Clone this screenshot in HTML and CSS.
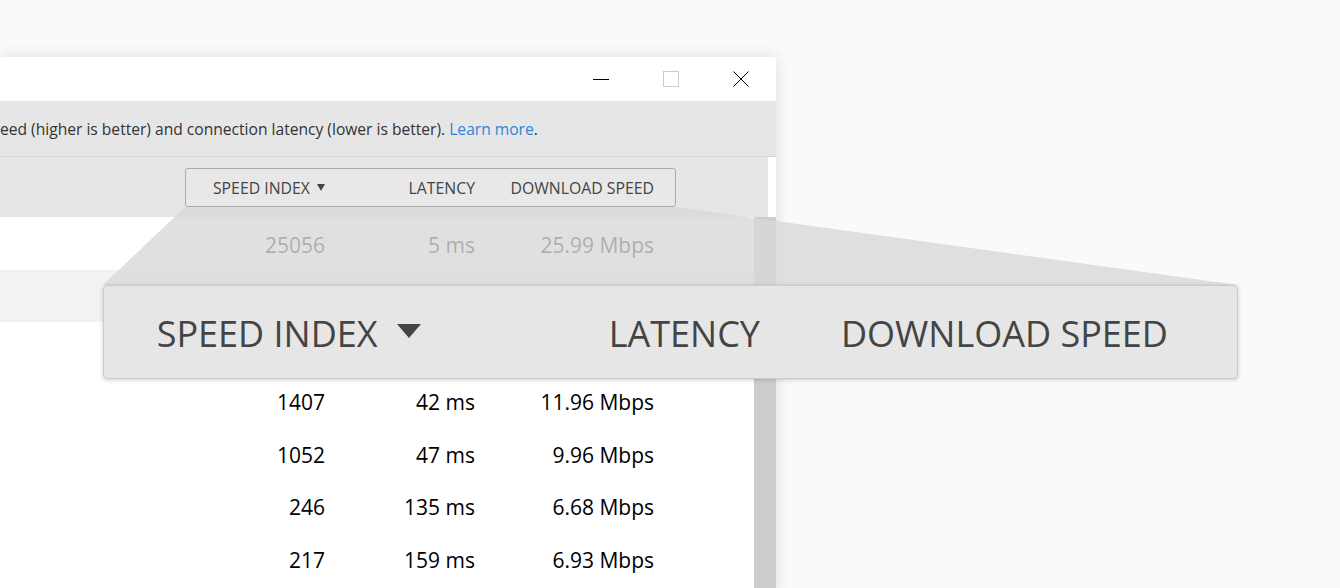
FILE: index.html
```html
<!DOCTYPE html>
<html lang="en">
<head>
    <meta charset="UTF-8">
    <meta name="viewport" content="width=device-width, initial-scale=1.0">
    <title>Speed index</title>
    <link rel="stylesheet" href="styles.css">
</head>
<body>
    <div class="window">
        <div class="titlebar">
            <div class="caption-btn">
                <svg width="16" height="16" viewBox="0 0 16 16"><path d="M0 8.5H16" stroke="#000" stroke-width="1"/></svg>
            </div>
            <div class="caption-btn">
                <svg width="16" height="16" viewBox="0 0 16 16"><rect x="0.5" y="0.5" width="15" height="15" fill="none" stroke="#ccc" stroke-width="1"/></svg>
            </div>
            <div class="caption-btn">
                <svg width="16" height="16" viewBox="0 0 16 16"><path d="M0.5 0.5L15.5 15.5M15.5 0.5L0.5 15.5" stroke="#000" stroke-width="1"/></svg>
            </div>
        </div>

        <div class="info">
            <p>eed (higher is better) and connection latency (lower is better). <a href="#">Learn more</a>.</p>
        </div>

        <div class="head-row">
            <div class="head-area">
                <div class="sort-box">
                    <span class="col">SPEED INDEX <i class="arrow"></i></span>
                    <span class="col">LATENCY</span>
                    <span class="col">DOWNLOAD SPEED</span>
                </div>
            </div>
            <div class="head-gap"></div>
        </div>

        <div class="list">
            <div class="rows">
                <div class="row"><span>25056</span><span>5 ms</span><span>25.99 Mbps</span></div>
                <div class="row alt"><span></span><span></span><span></span></div>
                <div class="row"><span></span><span></span><span></span></div>
                <div class="row"><span>1407</span><span>42 ms</span><span>11.96 Mbps</span></div>
                <div class="row"><span>1052</span><span>47 ms</span><span>9.96 Mbps</span></div>
                <div class="row"><span>246</span><span>135 ms</span><span>6.68 Mbps</span></div>
                <div class="row"><span>217</span><span>159 ms</span><span>6.93 Mbps</span></div>
            </div>
            <div class="scrollbar"></div>
        </div>
    </div>

    <!-- magnifier callout over the header -->
    <svg class="beam" width="1340" height="588" viewBox="0 0 1340 588">
        <polygon points="185,207 676,207 1238,285 103,285" fill="rgba(216,216,216,0.8)"/>
    </svg>
    <div class="zoom-box">
        <span class="col">SPEED INDEX <i class="arrow"></i></span>
        <span class="col">LATENCY</span>
        <span class="col">DOWNLOAD SPEED</span>
    </div>
</body>
</html>
```

FILE: styles.css
```css
*{
    box-sizing: border-box;
    margin: 0;
    padding: 0;
}
html, body{
    height: 100%;
}
body{
    background-color: #fafafa;
    font-family: "Open Sans", "Noto Sans", sans-serif;
    color: #000;
    overflow: hidden;
    position: relative;
}

.window{
    margin-top: 57px;
    width: 776px;
    background-color: #fff;
    box-shadow: 0 0 14px rgba(0, 0, 0, 0.12);
}
.titlebar{
    height: 44px;
    display: flex;
    justify-content: flex-end;
}
.caption-btn{
    width: 70px;
    display: flex;
    align-items: center;
    justify-content: center;
}
.caption-btn svg{
    display: block;
}

.info{
    height: 56px;
    background-color: #e6e6e6;
    border-bottom: 1px solid #d6d6d6;
    display: flex;
    align-items: center;
    overflow: hidden;
}
.info p{
    font-size: 15.6px;
    color: #333;
    white-space: nowrap;
}
.info a{
    color: #2b88d8;
    text-decoration: none;
}

.head-row{
    height: 60px;
    display: flex;
}
.head-area{
    flex: 1;
    background-color: #e6e6e6;
    padding: 11px 92px 0 0;
    display: flex;
    justify-content: flex-end;
    align-items: flex-start;
}
.head-gap{
    width: 8px;
    background-color: #fff;
}
.sort-box{
    width: 491px;
    height: 39px;
    border: 1px solid #ababab;
    border-radius: 3px;
    background-color: #e8e8e8;
    display: grid;
    grid-template-columns: 1fr 150px 179px;
    padding-right: 21px;
    align-items: center;
    font-size: 15.8px;
    color: #444;
}
.col{
    text-align: right;
    white-space: nowrap;
}
.arrow{
    display: inline-block;
    margin-left: 3px;
    border-left: 4.5px solid transparent;
    border-right: 4.5px solid transparent;
    border-top: 7px solid #444;
    vertical-align: 3px;
}

.list{
    height: 380px;
    display: flex;
    overflow: hidden;
}
.rows{
    flex: 1;
}
.row{
    height: 52.5px;
    padding-top: 3px;
    display: grid;
    grid-template-columns: 1fr 150px 179px;
    padding-right: 100px;
    align-items: center;
    font-size: 21px;
    text-align: right;
}
.row.alt{
    background-color: #f2f2f2;
}
.scrollbar{
    width: 22px;
    background-color: #cdcdcd;
}

.beam{
    position: absolute;
    top: 0;
    left: 0;
}
.zoom-box{
    position: absolute;
    top: 285px;
    left: 103px;
    width: 1135px;
    height: 94px;
    background-color: #e6e6e6;
    border: 1px solid #cbcbcb;
    border-radius: 4px;
    box-shadow: 0 1px 4px rgba(0, 0, 0, 0.18);
    display: grid;
    grid-template-columns: 1fr 339px 408px;
    padding-right: 69px;
    padding-top: 2px;
    align-items: center;
    font-size: 36px;
    color: #444;
}
.zoom-box .arrow{
    margin-left: 10px;
    border-left-width: 12px;
    border-right-width: 12px;
    border-top-width: 14px;
    vertical-align: 9px;
}
```
